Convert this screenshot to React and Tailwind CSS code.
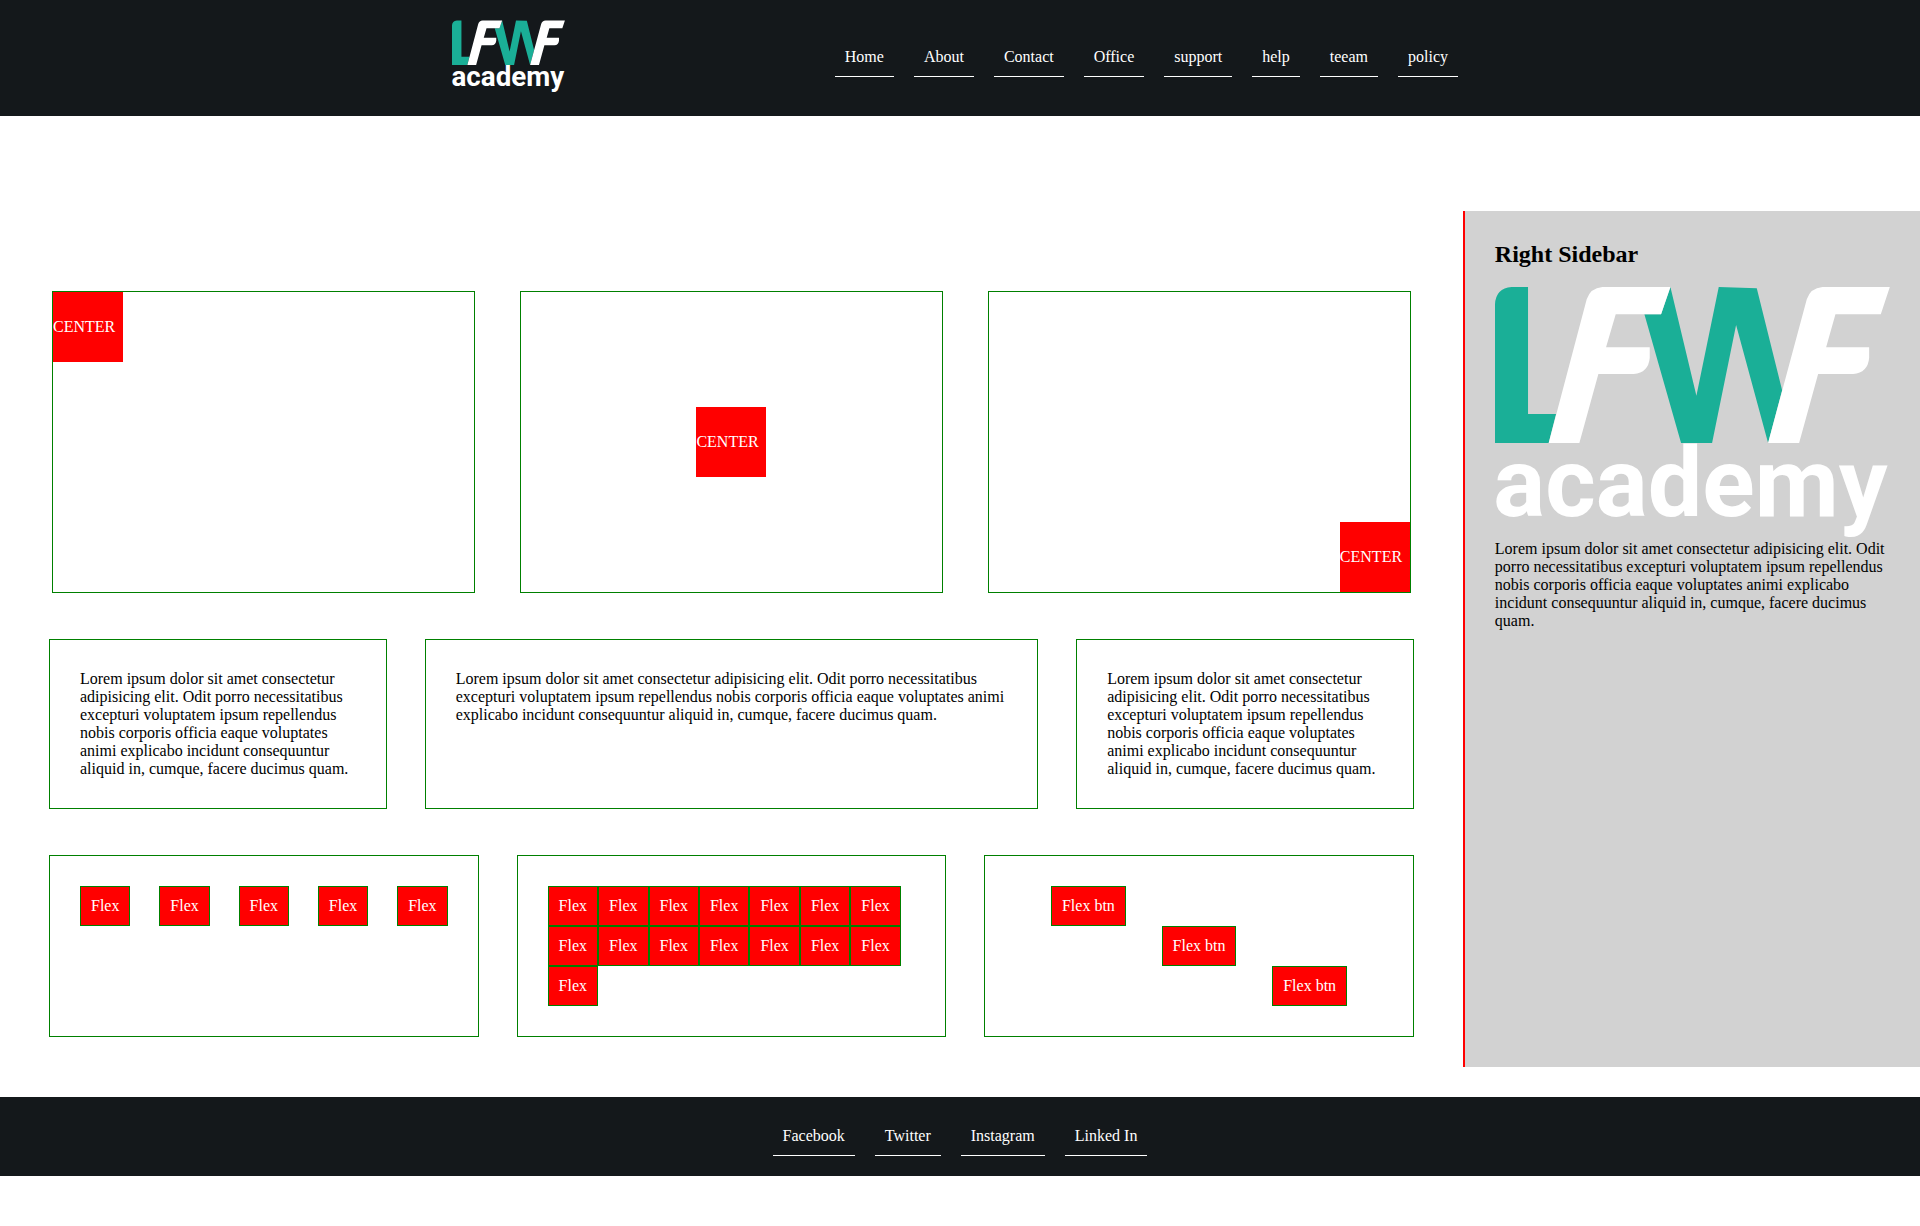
const LOREM =
  "Lorem ipsum dolor sit amet consectetur adipisicing elit. Odit porro necessitatibus excepturi voluptatem ipsum repellendus nobis corporis officia eaque voluptates animi explicabo incidunt consequuntur aliquid in, cumque, facere ducimus quam.";

const NAV = ["Home", "About", "Contact", "Office", "support", "help", "teeam", "policy"];
const SOCIAL = ["Facebook", "Twitter", "Instagram", "Linked In"];

function Logo({ className }) {
  return (
    <svg className={`overflow-visible ${className}`} viewBox="135 257 1185 753" role="img" aria-label="LFWF academy">
      <text x="130" y="946" fill="#ffffff" fontFamily="Roboto, sans-serif" fontWeight="700" fontSize="291">
        academy
      </text>
      <g fill="#1aaf97">
        <path d="M135 728V312Q137 264 185 260H234V641H318L296 728Z" />
        <path d="M661 260L739 586L806 260L920 264L996 570L954 728L858 374L786 728H693L583 342H633Z" />
      </g>
      <g fill="#ffffff">
        <path d="M296 728L410 297Q421 263 457 260H661L633 342H497L468 441H599V473Q595 517 551 521H445L388 728Z" />
        <path d="M954 728L1070 297Q1081 263 1117 260H1319L1292 342H1156L1128 441H1257V473Q1253 517 1209 521H1104L1047 728Z" />
      </g>
    </svg>
  );
}

function LinkList({ items, label }) {
  return (
    <nav aria-label={label}>
      <ul className="flex flex-wrap justify-center gap-5">
        {items.map((item) => (
          <li key={item}>
            <a href="#" className="block border-b border-white p-2.5 text-white">
              {item}
            </a>
          </li>
        ))}
      </ul>
    </nav>
  );
}

function CenterBox({ placement }) {
  return (
    <div className={`flex h-[302px] flex-1 border border-[#008000] ${placement}`}>
      <div className="flex size-[70px] items-center bg-[#ff0000] text-white">CENTER</div>
    </div>
  );
}

function FlexButton({ children, className = "" }) {
  return (
    <button type="button" className={`border border-[#008000] bg-[#ff0000] p-2.5 text-white ${className}`}>
      {children}
    </button>
  );
}

export default function App() {
  return (
    <div className="bg-white font-['Liberation_Serif',serif] text-base leading-[18px] text-black">
      <header className="bg-[#14181b] py-5">
        <div className="mx-auto flex h-[76px] max-w-[1016px] items-center justify-between">
          <a href="#" className="self-start">
            <Logo className="h-[72px] w-[113px]" />
          </a>
          <div className="px-2.5 pb-px">
            <LinkList items={NAV} label="Main" />
          </div>
        </div>
      </header>

      <div className="mt-[95px] grid grid-cols-[minmax(0,16fr)_minmax(0,5fr)]">
        <main className="flex flex-col gap-[46px] px-[49px] pt-20 pb-[30px]">
          <section className="flex gap-[45px] px-[3px]">
            <CenterBox placement="items-start justify-start" />
            <CenterBox placement="items-center justify-center" />
            <CenterBox placement="items-end justify-end" />
          </section>

          <section className="flex gap-[38px]">
            <p className="flex-1 border border-[#008000] p-[30px]">{LOREM}</p>
            <p className="flex-2 border border-[#008000] p-[30px]">{LOREM}</p>
            <p className="flex-1 border border-[#008000] p-[30px]">{LOREM}</p>
          </section>

          <section className="flex gap-[38px]">
            <div className="flex flex-1 items-start justify-between border border-[#008000] p-[30px]">
              {Array.from({ length: 5 }, (_, i) => (
                <FlexButton key={i}>Flex</FlexButton>
              ))}
            </div>
            <div className="flex flex-1 flex-wrap content-start border border-[#008000] p-[30px]">
              {Array.from({ length: 15 }, (_, i) => (
                <FlexButton key={i}>Flex</FlexButton>
              ))}
            </div>
            <div className="flex flex-1 justify-evenly border border-[#008000] p-[30px]">
              <FlexButton className="self-start">Flex btn</FlexButton>
              <FlexButton className="self-center">Flex btn</FlexButton>
              <FlexButton className="self-end">Flex btn</FlexButton>
            </div>
          </section>
        </main>

        <aside className="border-l-2 border-[#ff0000] bg-[#d2d2d2] p-[30px]">
          <h2 className="mb-[18px] text-2xl leading-[27px] font-bold">Right Sidebar</h2>
          <Logo className="mb-[3px] block w-full" />
          <p>{LOREM}</p>
        </aside>
      </div>

      <footer className="mt-[30px] bg-[#14181b] py-5">
        <LinkList items={SOCIAL} label="Social" />
      </footer>
    </div>
  );
}
